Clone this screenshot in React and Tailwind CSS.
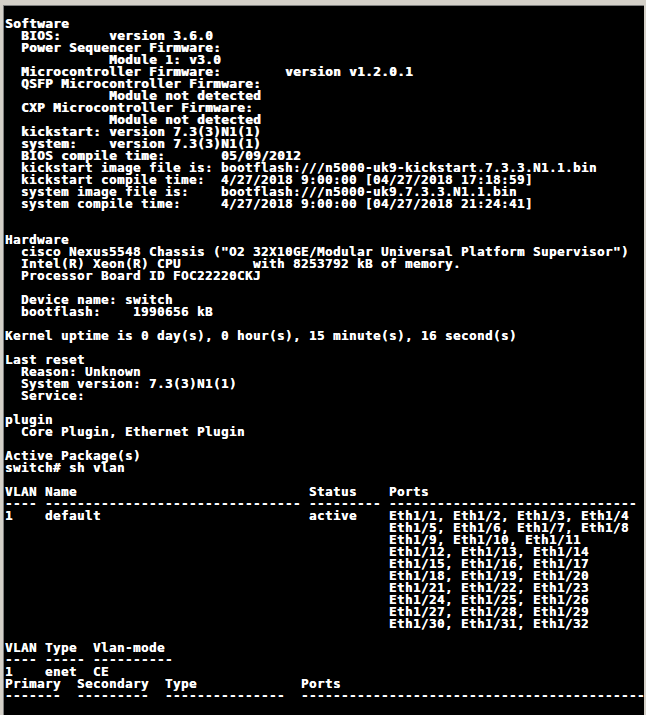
import React from 'react';

const pad = ' '.repeat(48);

const lines = [
    ['', 0],
    ['Software', 1],
    ['  BIOS:      version 3.6.0', 1],
    ['  Power Sequencer Firmware:', 1],
    ['             Module 1: v3.0', 1],
    ['  Microcontroller Firmware:        version v1.2.0.1', 1],
    ['  QSFP Microcontroller Firmware:', 1],
    ['             Module not detected', 1],
    ['  CXP Microcontroller Firmware:', 1],
    ['             Module not detected', 1],
    ['  kickstart: version 7.3(3)N1(1)', 1],
    ['  system:    version 7.3(3)N1(1)', 1],
    ['  BIOS compile time:       05/09/2012', 1],
    ['  kickstart image file is: bootflash:///n5000-uk9-kickstart.7.3.3.N1.1.bin'],
    ['  kickstart compile time:  4/27/2018 9:00:00 [04/27/2018 17:18:59]'],
    ['  system image file is:    bootflash:///n5000-uk9.7.3.3.N1.1.bin'],
    ['  system compile time:     4/27/2018 9:00:00 [04/27/2018 21:24:41]'],
    [''],
    [''],
    ['Hardware'],
    ['  cisco Nexus5548 Chassis ("O2 32X10GE/Modular Universal Platform Supervisor")'],
    ['  Intel(R) Xeon(R) CPU         with 8253792 kB of memory.'],
    ['  Processor Board ID FOC22220CKJ'],
    [''],
    ['  Device name: switch'],
    ['  bootflash:    1990656 kB'],
    [''],
    ['Kernel uptime is 0 day(s), 0 hour(s), 15 minute(s), 16 second(s)'],
    [''],
    ['Last reset'],
    ['  Reason: Unknown'],
    ['  System version: 7.3(3)N1(1)'],
    ['  Service:'],
    [''],
    ['plugin'],
    ['  Core Plugin, Ethernet Plugin'],
    [''],
    ['Active Package(s)'],
    ['switch# sh vlan'],
    [''],
    ['VLAN Name                             Status    Ports'],
    ['---- -------------------------------- --------- -------------------------------'],
    ['1    default                          active    Eth1/1, Eth1/2, Eth1/3, Eth1/4'],
    [pad + 'Eth1/5, Eth1/6, Eth1/7, Eth1/8'],
    [pad + 'Eth1/9, Eth1/10, Eth1/11'],
    [pad + 'Eth1/12, Eth1/13, Eth1/14'],
    [pad + 'Eth1/15, Eth1/16, Eth1/17'],
    [pad + 'Eth1/18, Eth1/19, Eth1/20'],
    [pad + 'Eth1/21, Eth1/22, Eth1/23'],
    [pad + 'Eth1/24, Eth1/25, Eth1/26'],
    [pad + 'Eth1/27, Eth1/28, Eth1/29'],
    [pad + 'Eth1/30, Eth1/31, Eth1/32'],
    [''],
    ['VLAN Type  Vlan-mode'],
    ['---- ----- ----------'],
    ['1    enet  CE'],
    ['Primary  Secondary  Type             Ports'],
    ['-------  ---------  ---------------  -------------------------------------------'],
    [''],
];

const App = () => {
    return (
        <div className="w-[646px] h-[715px] overflow-hidden bg-[#d4d0c8] pt-[5px] pl-[3px] pr-[2px]">
            <div className="h-full bg-black border-t border-l border-[#808080] pl-px overflow-hidden font-['DejaVu_Sans_Mono',monospace] font-bold text-[12.5px] tracking-[0.475px] leading-[12px] text-white">
                {lines.map(([text, heavy], i) => (
                    <div
                        key={i}
                        className={heavy ? 'h-3 whitespace-pre [text-shadow:0.7px_0_0_#fff]' : 'h-3 whitespace-pre [text-shadow:0.3px_0_0_#fff]'}
                    >
                        {text}
                    </div>
                ))}
            </div>
        </div>
    );
};

export default App;
